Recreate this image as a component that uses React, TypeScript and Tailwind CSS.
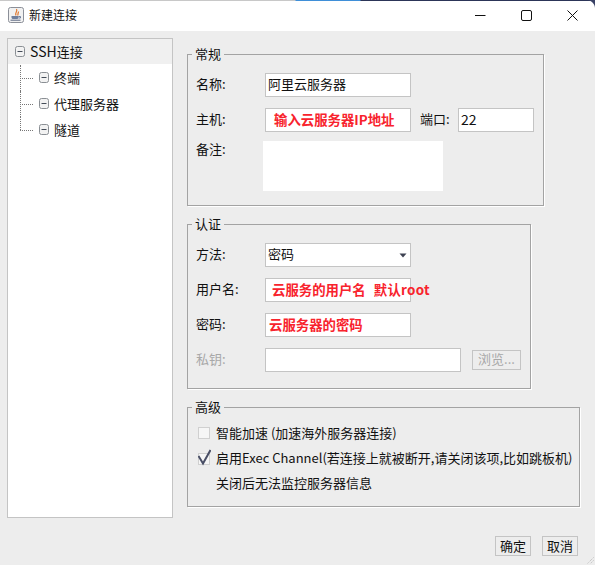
import React from "react";

const font = { fontFamily: '"Noto Sans CJK SC", "Liberation Sans", sans-serif' };

function TreeBox() {
  return (
    <svg width="10" height="11" viewBox="0 0 10 11" className="shrink-0">
      <rect x="0.5" y="0.5" width="9" height="10" rx="2" fill="#f2f2f2" stroke="#8a8f94" />
      <path d="M2.5 5.5H7.5" stroke="#444c58" />
    </svg>
  );
}

function TreeChild({ label, last }: { label: string; last?: boolean }) {
  return (
    <div className="relative flex h-[26px] items-center gap-[5px] pb-[1px] pl-[31px]">
      <div className={`absolute left-[12px] top-0 border-l border-dotted border-[#777] ${last ? "h-[13px]" : "h-[26px]"}`} />
      <div className="absolute left-[12px] top-[13px] w-[13px] border-t border-dotted border-[#777]" />
      <TreeBox />
      <span>{label}</span>
    </div>
  );
}

function Legend({ children }: { children: React.ReactNode }) {
  return (
    <span className="absolute left-[4px] top-[-11px] bg-[#ededed] px-[3px] leading-[20px] text-[#111]">{children}</span>
  );
}

function Group({ className, children }: { className: string; children: React.ReactNode }) {
  return (
    <div className={`relative border border-[#a3a3a3] shadow-[1px_1px_0_#fff] ${className}`}>{children}</div>
  );
}

function Label({ children, dim }: { children: React.ReactNode; dim?: boolean }) {
  return <span className={`w-[69px] shrink-0 pb-[2px] ${dim ? "text-[#a8a8a8]" : "text-[#111]"}`}>{children}</span>;
}

function Input({ className, children }: { className: string; children?: React.ReactNode }) {
  return (
    <div className={`flex h-[24px] items-center overflow-visible whitespace-nowrap border border-[#c4c4c4] bg-white pb-[2px] ${className}`}>
      {children}
    </div>
  );
}

function Red({ children }: { children: React.ReactNode }) {
  return <span className="text-[13.4px] font-bold text-[#f8232d]">{children}</span>;
}

export default function App() {
  return (
    <div style={font} className="relative flex h-[565px] w-[595px] flex-col overflow-hidden bg-[#ededed] text-[13px] text-[#111]">
      <div className="absolute left-0 right-0 top-0 h-[1px] bg-[linear-gradient(90deg,#c8c8c8_0,#c8c8c8_295px,#3f8fd8_296px,#3f8fd8_360px,#2c3558_361px,#2c3558_100%)]" />
      <svg className="absolute right-0 top-0" width="8" height="8" viewBox="0 0 8 8">
        <path d="M0 0H8V8C8 4 4 0 0 0Z" fill="#3a4266" />
      </svg>
      <div className="flex h-[31px] shrink-0 items-center justify-between bg-white pb-[1px]">
        <div className="flex items-center gap-[5px] pl-[8px]">
          <svg width="16" height="16" viewBox="0 0 16 16">
            <rect x="0.5" y="0.5" width="15" height="15" rx="2" fill="#f1f1f1" stroke="#8b8f98" />
            <path d="M8.5 2C10 4.5 6.5 5.5 8 8.5M10.5 4.5C10.5 6 9.5 6.5 10 8.5" stroke="#e0782f" strokeWidth="1.2" fill="none" />
            <path d="M3.5 9H10.5V10.5C10.5 11.5 9.5 12 8.5 12H5.5C4.5 12 3.5 11.5 3.5 10.5Z" fill="#6f7f9c" />
            <path d="M10.5 9.5H12.5V11H10.5" stroke="#6f7f9c" fill="none" />
            <path d="M2.5 13.2H12.5" stroke="#5a6680" />
          </svg>
          <span className="text-[12px]">新建连接</span>
        </div>
        <div className="flex items-center gap-[35px] pr-[17px]">
          <svg width="11" height="11" viewBox="0 0 11 11"><path d="M0 5.5H10.5" stroke="#111" /></svg>
          <svg width="11" height="11" viewBox="0 0 11 11"><rect x="0.5" y="0.5" width="10" height="10" rx="1.5" fill="none" stroke="#111" /></svg>
          <svg width="11" height="11" viewBox="0 0 11 11"><path d="M0.5 0.5L10.5 10.5M10.5 0.5L0.5 10.5" stroke="#111" /></svg>
        </div>
      </div>

      <div className="relative flex-1">
        <div className="absolute left-[7px] top-[7px] h-[480px] w-[166px] border border-[#c4c4c4] bg-white">
          <div className="flex h-[25px] items-center gap-[5px] bg-[#f0f0f0] pl-[7px]">
            <TreeBox />
            <span><span className="text-[14px]">SSH</span>连接</span>
          </div>
          <div className="mt-[1px] flex flex-col">
            <TreeChild label="终端" />
            <TreeChild label="代理服务器" />
            <TreeChild label="隧道" last />
          </div>
        </div>

        <div className="absolute left-[187px] top-[23px] flex flex-col">
          <Group className="h-[152px] w-[357px] pl-[8px] pt-[18px]">
            <Legend>常规</Legend>
            <div className="flex h-[24px] items-center">
              <Label>名称:</Label>
              <Input className="w-[146px] pl-[2px]">阿里云服务器</Input>
            </div>
            <div className="mt-[11px] flex h-[24px] items-center">
              <Label>主机:</Label>
              <Input className="w-[146px] pl-[8px]"><Red>输入云服务器IP地址</Red></Input>
              <span className="ml-[9px] w-[38px] pb-[2px]">端口:</span>
              <Input className="w-[76px] pl-[2px] text-[14px]">22</Input>
            </div>
            <div className="mt-[9px] flex items-start">
              <span className="w-[67px] shrink-0 leading-[16px]">备注:</span>
              <div className="h-[50px] w-[180px] bg-white" />
            </div>
          </Group>

          <Group className="mt-[18px] h-[165px] w-[344px] pl-[8px] pt-[18px]">
            <Legend>认证</Legend>
            <div className="flex h-[24px] items-center">
              <Label>方法:</Label>
              <Input className="w-[146px] justify-between bg-[#f7f7f7] pl-[2px] pr-[3px]">
                密码
                <svg width="8" height="5" viewBox="0 0 8 5" className="mt-[2px]"><path d="M0.5 0.5H7.5L4 4.5Z" fill="#3e4252" /></svg>
              </Input>
            </div>
            <div className="mt-[11px] flex h-[24px] items-center">
              <Label>用户名:</Label>
              <Input className="w-[146px] pl-[6px]"><Red>云服务的用户名<span className="ml-[8px] tracking-[0.3px]">默认root</span></Red></Input>
            </div>
            <div className="mt-[11px] flex h-[24px] items-center">
              <Label>密码:</Label>
              <Input className="w-[146px] pl-[3px]"><Red>云服务器的密码</Red></Input>
            </div>
            <div className="mt-[11px] flex h-[24px] items-center">
              <Label dim>私钥:</Label>
              <Input className="w-[196px]" />
              <div className="ml-[11px] flex h-[20px] w-[49px] items-center justify-center border border-[#c4c4c4] pb-[2px] text-[#a8a8a8]">浏览...</div>
            </div>
          </Group>

          <Group className="mt-[18px] h-[100px] w-[393px] pl-[10px] pt-[13px]">
            <Legend>高级</Legend>
            <div className="flex h-[25px] items-center gap-[6px] pb-[2px]">
              <div className="mt-[1px] h-[12px] w-[12px] border border-[#d0d0d0] bg-[#f6f6f6]" />
              <span>智能加速 (加速海外服务器连接)</span>
            </div>
            <div className="flex h-[25px] items-center gap-[5px] pb-[2px]">
              <svg width="13" height="17" viewBox="0 0 13 17" className="shrink-0">
                <rect x="0.5" y="4.5" width="11" height="11" fill="#f6f6f6" stroke="#d0d0d0" />
                <path d="M0.5 7L5 14.5L12.5 1" fill="none" stroke="#4a4f66" strokeWidth="2" />
              </svg>
              <span className="whitespace-nowrap">启用Exec Channel(若连接上就被断开,请关闭该项,比如跳板机)</span>
            </div>
            <div className="flex h-[25px] items-center pb-[2px] pl-[18px]">关闭后无法监控服务器信息</div>
          </Group>
        </div>

        <div className="absolute left-[495px] top-[505px] flex gap-[11px]">
          <div className="flex h-[20px] w-[36px] items-center justify-center border border-[#c4c4c4] pb-[1px]">确定</div>
          <div className="flex h-[20px] w-[36px] items-center justify-center border border-[#c4c4c4] pb-[1px]">取消</div>
        </div>

        <svg className="absolute bottom-[1px] right-[1px]" width="7" height="7" viewBox="0 0 7 7">
          <path d="M6.5 0.5L0.5 6.5M6.5 3.5L3.5 6.5" stroke="#b5b5b5" strokeDasharray="1 1" />
        </svg>
      </div>
    </div>
  );
}
